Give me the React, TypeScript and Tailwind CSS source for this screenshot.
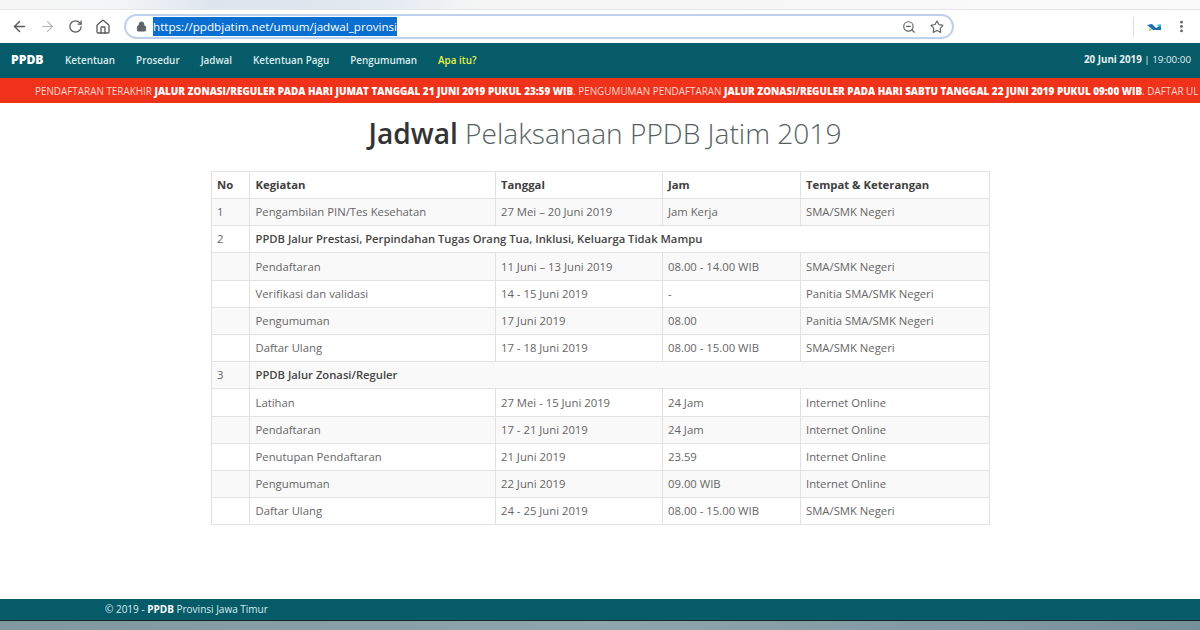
import React from "react";
import { ArrowLeft, ArrowRight, RotateCw, Home, Lock, ZoomOut, Star, MoreVertical } from "lucide-react";

type Row = { no?: string; a: string; b?: string; c?: string; d?: string; span?: boolean; tall?: boolean };
const rows: Row[] = [
  { no: "1", a: "Pengambilan PIN/Tes Kesehatan", b: "27 Mei – 20 Juni 2019", c: "Jam Kerja", d: "SMA/SMK Negeri" },
  { no: "2", a: "PPDB Jalur Prestasi, Perpindahan Tugas Orang Tua, Inklusi, Keluarga Tidak Mampu", span: true },
  { a: "Pendaftaran", b: "11 Juni – 13 Juni 2019", c: "08.00 - 14.00 WIB", d: "SMA/SMK Negeri", tall: true },
  { a: "Verifikasi dan validasi", b: "14 - 15 Juni 2019", c: "-", d: "Panitia SMA/SMK Negeri" },
  { a: "Pengumuman", b: "17 Juni 2019", c: "08.00", d: "Panitia SMA/SMK Negeri" },
  { a: "Daftar Ulang", b: "17 - 18 Juni 2019", c: "08.00 - 15.00 WIB", d: "SMA/SMK Negeri" },
  { no: "3", a: "PPDB Jalur Zonasi/Reguler", span: true },
  { a: "Latihan", b: "27 Mei - 15 Juni 2019", c: "24 Jam", d: "Internet Online", tall: true },
  { a: "Pendaftaran", b: "17 - 21 Juni 2019", c: "24 Jam", d: "Internet Online" },
  { a: "Penutupan Pendaftaran", b: "21 Juni 2019", c: "23.59", d: "Internet Online" },
  { a: "Pengumuman", b: "22 Juni 2019", c: "09.00 WIB", d: "Internet Online" },
  { a: "Daftar Ulang", b: "24 - 25 Juni 2019", c: "08.00 - 15.00 WIB", d: "SMA/SMK Negeri" },
];

const nav = ["Ketentuan", "Prosedur", "Jadwal", "Ketentuan Pagu", "Pengumuman"];
const th = "h-[27px] border border-[#e2e2e2] py-0 pr-[5px] text-left font-bold text-[#404040]";
const td = "border border-[#e2e2e2] py-0 pr-[5px] text-left text-[#666666]";

export default function App() {
  return (
    <div className="flex h-[630px] w-[1200px] flex-col overflow-hidden bg-white font-['Open_Sans',sans-serif]">
      <div className="h-[10px] shrink-0 border-b border-[#e6e6e6] bg-[linear-gradient(90deg,#f7f7f7_0%,#f4f5f6_10%,#dce5ee_18%,#e0e8f0_30%,#f5f5f5_40%,#fbfbfb_100%)]" />
      <div className="flex h-[33px] shrink-0 items-center bg-white pl-[11px] pr-[10px]">
        <ArrowLeft size={17} strokeWidth={2} className="text-[#5a5a5a]" />
        <ArrowRight size={17} strokeWidth={1.5} className="ml-[11px] text-[#b5b5b5]" />
        <RotateCw size={15} strokeWidth={2} className="ml-[12px] text-[#5a5a5a]" />
        <Home size={16} strokeWidth={2} className="ml-[12px] text-[#5a5a5a]" />
        <div className="ml-[13px] flex h-[25px] w-[830px] items-center rounded-full border-2 border-[#bdd0ec] bg-white pl-[10px] pr-[8px]">
          <Lock size={11} fill="#5f6368" strokeWidth={2} className="text-[#5f6368]" />
          <span className="ml-[6px] bg-[#0a6fd0] text-[11.65px] leading-[19px] text-white">https://ppdbjatim.net/umum/jadwal_provinsi</span>
          <ZoomOut size={14} strokeWidth={2} className="ml-auto text-[#5f6368]" />
          <Star size={14} strokeWidth={2} className="ml-[14px] text-[#5f6368]" />
        </div>
        <div className="ml-auto mr-[1px] flex items-center">
          <div className="h-[20px] w-px bg-[#dddddd]" />
          <svg width="16" height="10" viewBox="0 0 16 10" className="ml-[12px]">
            <path d="M1 3 L6 2 L10 6 L15 3 L15 8 L7 8 Z" fill="#1c6fb5" />
            <path d="M3 6 L7 8 L3 9 Z" fill="#b7cf6a" />
            <path d="M10 3 L15 2 L15 5 Z" fill="#39c7d9" />
          </svg>
          <MoreVertical size={15} strokeWidth={2.5} className="ml-[12px] text-[#5f6368]" />
        </div>
      </div>

      <nav className="flex h-[35px] shrink-0 items-center bg-[#055b68] pl-[11px] pr-[9px] text-[9.9px] font-semibold text-[#dcecee]">
        <span className="mr-[21.5px] text-[12.2px] font-extrabold text-white">PPDB</span>
        <div className="flex gap-[21px]">
          {nav.map((n) => (
            <span key={n}>{n}</span>
          ))}
          <span className="text-[#e8f04a]">Apa itu?</span>
        </div>
        <div className="ml-auto text-[9.8px] text-[#e6f1f2]">
          <span className="font-bold">20 Juni 2019</span> <span className="font-normal">| 19:00:00</span>
        </div>
      </nav>

      <div className="flex h-[25px] shrink-0 items-center overflow-hidden whitespace-nowrap bg-[#f0321a] pl-[35px] pt-[1px] text-[9.9px] text-[#fbd6cf]">
        <span>
          PENDAFTARAN TERAKHIR <b className="text-[9.88px] font-extrabold text-white">JALUR ZONASI/REGULER PADA HARI JUMAT TANGGAL 21 JUNI 2019 PUKUL 23:59 WIB</b>. PENGUMUMAN PENDAFTARAN <b className="text-[9.88px] font-extrabold text-white">JALUR ZONASI/REGULER PADA HARI SABTU TANGGAL 22 JUNI 2019 PUKUL 09:00 WIB</b>. DAFTAR UL
        </span>
      </div>

      <main className="flex flex-1 flex-col items-center">
        <h1 className="mt-[10px] h-[41px] pl-[10px] text-center text-[28.1px] font-light leading-[40px] text-[#56625f]">
          <b className="font-semibold text-[#333333]">Jadwal</b> Pelaksanaan PPDB Jatim 2019
        </h1>
        <table className="mt-[17px] w-[778px] table-fixed border-collapse text-[11.3px]">
          <colgroup>
            <col className="w-[38px]" />
            <col className="w-[246px]" />
            <col className="w-[167px]" />
            <col className="w-[138px]" />
            <col className="w-[189px]" />
          </colgroup>
          <thead>
            <tr>
              <th className={`${th} pl-[5.5px]`}>No</th>
              <th className={`${th} pl-[6px]`}>Kegiatan</th>
              <th className={`${th} pl-[5.5px]`}>Tanggal</th>
              <th className={`${th} pl-[5.5px]`}>Jam</th>
              <th className={`${th} pl-[5.5px]`}>Tempat &amp; Keterangan</th>
            </tr>
          </thead>
          <tbody>
            {rows.map((r, i) => (
              <tr key={i} className={`${i % 2 === 0 ? "bg-[#f9f9f9]" : "bg-white"} ${r.tall ? "h-[28px]" : "h-[27px]"}`}>
                <td className={`${td} pl-[5.5px]`}>{r.no}</td>
                {r.span ? (
                  <td colSpan={4} className={`${td} pl-[6px] text-[11.25px] font-semibold !text-[#444444]`}>{r.a}</td>
                ) : (
                  <>
                    <td className={`${td} pl-[6px] ${r.tall ? "pt-[1px]" : ""}`}>{r.a}</td>
                    <td className={`${td} pl-[5.5px] ${r.tall ? "pt-[1px]" : ""}`}>{r.b}</td>
                    <td className={`${td} pl-[5.5px] ${r.tall ? "pt-[1px]" : ""}`}>{r.c}</td>
                    <td className={`${td} pl-[5.5px] ${r.tall ? "pt-[1px]" : ""}`}>{r.d}</td>
                  </>
                )}
              </tr>
            ))}
          </tbody>
        </table>
      </main>

      <footer className="flex h-[22px] shrink-0 items-center border-b border-[#10252a] bg-[#055b68] pl-[105px] text-[10px] text-[#dcecee]">
        <span>© 2019 - <b className="font-bold text-white">PPDB</b> Provinsi Jawa Timur</span>
      </footer>
      <div className="h-[9px] shrink-0 bg-gradient-to-r from-[#7f979f] via-[#8fa5ad] to-[#76909a]" />
    </div>
  );
}
